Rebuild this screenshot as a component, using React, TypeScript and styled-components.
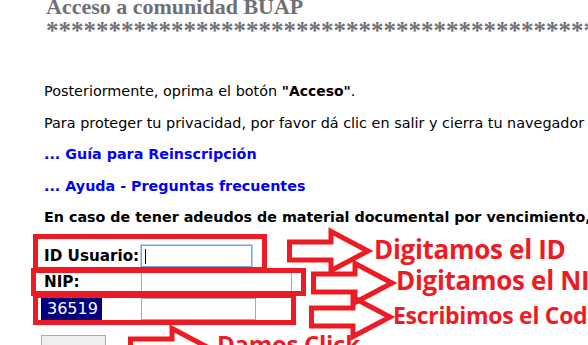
import { FC, ReactNode } from 'react';
import styled, { createGlobalStyle } from 'styled-components';

const GlobalStyle = createGlobalStyle`
  html, body {
    margin: 0;
    padding: 0;
    background: #ffffff;
  }
`;

const RED = '#ed1c24';

const Page = styled.div`
  position: relative;
  width: 588px;
  height: 345px;
  overflow: hidden;
  background: #fff;
  font-family: 'DejaVu Sans', Verdana, sans-serif;
`;

const Header = styled.div`
  margin-top: -4px;
  padding-left: 46px;
  color: #6f7075;
  font-family: 'Liberation Serif', Georgia, serif;
`;

const Title = styled.h1`
  margin: 0;
  font-size: 22px;
  line-height: 22px;
  font-weight: bold;
`;

const Stars = styled.div`
  display: flex;
  height: 22px;
  margin-top: 2px;
`;

const Star = styled.span`
  flex: 0 0 9.4px;
  text-align: center;
  font-size: 25px;
  line-height: 22px;
  font-weight: bold;
`;

const Content = styled.div`
  padding-left: 44px;
  margin-top: 40px;
`;

const Text = styled.p<{ $bold?: boolean; $link?: boolean }>`
  margin: 0 0 13.5px;
  font-size: ${(p) => (p.$bold ? 14.3 : 14.4)}px;
  line-height: 18px;
  white-space: nowrap;
  color: ${(p) => (p.$link ? '#0000ff' : '#000')};
  font-weight: ${(p) => (p.$bold ? 'bold' : 'normal')};

  b {
    font-size: 13.9px;
  }
`;

const FormGrid = styled.div`
  display: grid;
  grid-template-columns: 97px auto;
  row-gap: 3.5px;
  margin-top: 19px;
  align-items: center;
`;

const Label = styled.span`
  font-size: 15.2px;
  font-weight: bold;
  color: #000;
`;

const Captcha = styled.span`
  justify-self: start;
  margin-left: -3px;
  width: 61px;
  height: 25px;
  padding-left: 6px;
  box-sizing: border-box;
  background: #000080;
  color: #fff;
  font-size: 16px;
  line-height: 25px;
`;

const Input = styled.div<{ $w: number; $focus?: boolean }>`
  position: relative;
  width: ${(p) => p.$w}px;
  height: 22px;
  box-sizing: border-box;
  border: 1px solid ${(p) => (p.$focus ? '#7ea1d6' : '#a9a9a9')};
  box-shadow: ${(p) => (p.$focus ? '0 0 0 1px #b6d2f5' : 'none')};
  background: #fff;
`;

const Caret = styled.span`
  position: absolute;
  left: 3px;
  top: 3px;
  width: 1px;
  height: 15px;
  background: #000;
`;

const Button = styled.div`
  margin: 14px 0 0 -3px;
  width: 65px;
  height: 24px;
  box-sizing: border-box;
  border: 1px solid #adadad;
  background: #efefef;
`;

const RedBox = styled.div<{ $x: number; $y: number; $w: number; $h: number }>`
  position: absolute;
  left: ${(p) => p.$x}px;
  top: ${(p) => p.$y}px;
  width: ${(p) => p.$w}px;
  height: ${(p) => p.$h}px;
  box-sizing: border-box;
  border: 5px solid ${RED};
`;

const Note = styled.div<{ $x: number; $y: number; $gap: number }>`
  position: absolute;
  left: ${(p) => p.$x}px;
  top: ${(p) => p.$y}px;
  display: flex;
  align-items: center;
  gap: ${(p) => p.$gap}px;
`;

const NoteText = styled.span<{ $size: number; $lift: number }>`
  font-family: 'Open Sans', 'Noto Sans', sans-serif;
  font-weight: bold;
  font-size: ${(p) => p.$size}px;
  line-height: 0.9;
  color: ${RED};
  white-space: nowrap;
  letter-spacing: -0.3px;
  margin-top: ${(p) => -p.$lift}px;
`;

// hollow block arrow, 84 x 44, outlined in red
const Arrow: FC = () => (
  <svg width={84} height={44} viewBox="0 0 84 44" style={{ flex: 'none', overflow: 'visible' }}>
    <path
      d="M2.5 13 H44 V2.5 L81 22 L44 41.5 V31 H2.5 Z"
      fill="none"
      stroke={RED}
      strokeWidth={5}
      strokeLinejoin="miter"
    />
  </svg>
);

type AnnotationProps = { x: number; y: number; gap: number; size: number; lift?: number; children: ReactNode };

const Annotation: FC<AnnotationProps> = ({ x, y, gap, size, lift = 0, children }) => (
  <Note $x={x} $y={y} $gap={gap}>
    <Arrow />
    <NoteText $size={size} $lift={lift}>
      {children}
    </NoteText>
  </Note>
);

const App: FC = () => (
  <Page>
    <GlobalStyle />
    <Header>
      <Title>Acceso a comunidad BUAP</Title>
      <Stars>
        {Array.from({ length: 58 }, (_, i) => (
          <Star key={i}>*</Star>
        ))}
      </Stars>
    </Header>
    <Content>
      <Text>
        Posteriormente, oprima el botón <b>"Acceso"</b>.
      </Text>
      <Text>Para proteger tu privacidad, por favor dá clic en salir y cierra tu navegador</Text>
      <Text $bold $link>
        ... Guía para Reinscripción
      </Text>
      <Text $bold $link>
        ... Ayuda - Preguntas frecuentes
      </Text>
      <Text $bold>En caso de tener adeudos de material documental por vencimiento, favor de acudir</Text>
      <FormGrid>
        <Label>ID Usuario:</Label>
        <Input $w={111} $focus>
          <Caret />
        </Input>
        <Label>NIP:</Label>
        <Input $w={151} />
        <Captcha>36519</Captcha>
        <Input $w={115} />
      </FormGrid>
      <Button />
    </Content>

    <RedBox $x={33} $y={234} $w={234} $h={38} />
    <RedBox $x={31} $y={268} $w={275} $h={28} />
    <RedBox $x={33} $y={293} $w={263} $h={32} />

    <Annotation x={287} y={229} gap={3} size={26} lift={2}>
      Digitamos el ID
    </Annotation>
    <Annotation x={311} y={261} gap={1} size={26} lift={4}>
      Digitamos el NIP
    </Annotation>
    <Annotation x={309} y={295} gap={-1} size={23} lift={4}>
      Escribimos el Codigo
    </Annotation>
    <Annotation x={128} y={326} gap={5} size={24} lift={8}>
      Damos Click
    </Annotation>
  </Page>
);

export default App;
